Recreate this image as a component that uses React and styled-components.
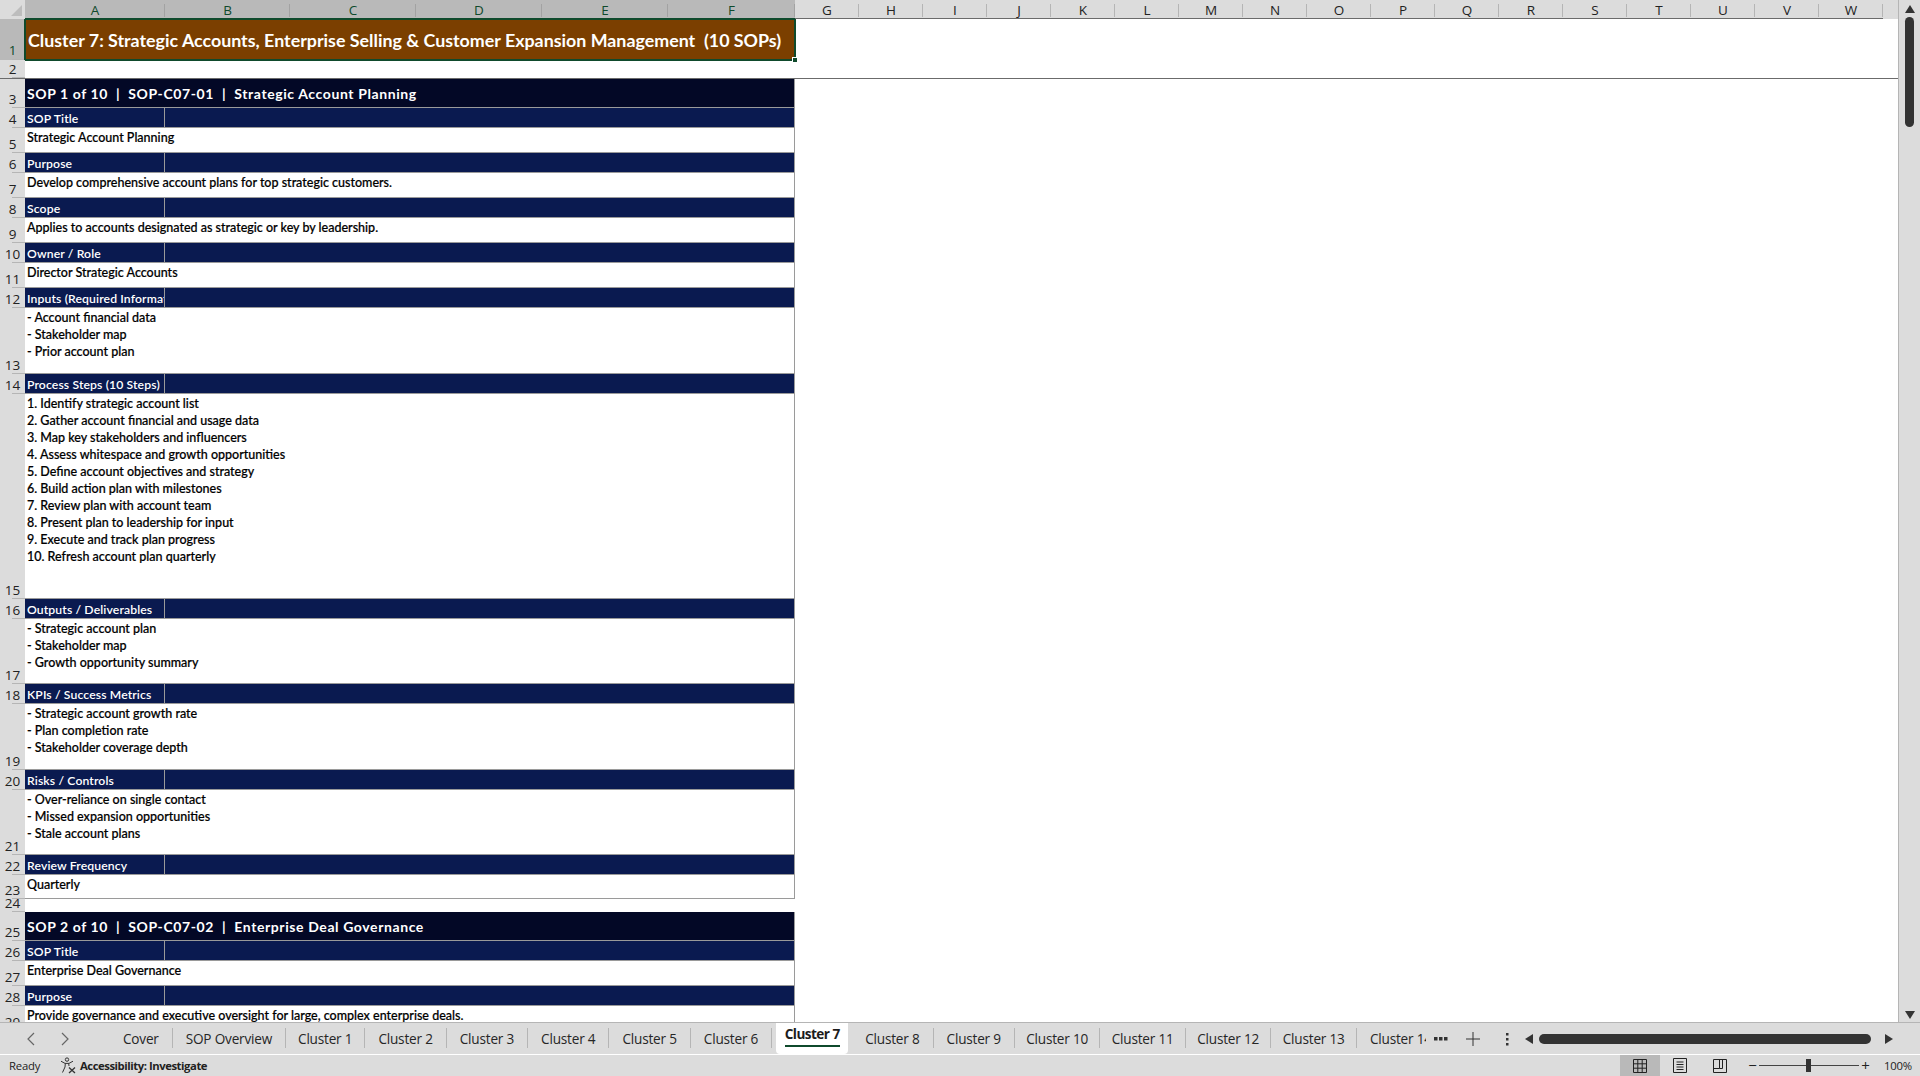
import React from 'react';
import styled, { createGlobalStyle } from 'styled-components';

const GlobalStyle = createGlobalStyle`
  html, body { margin: 0; padding: 0; background: #fff; overflow: hidden; }
  * { box-sizing: border-box; }
`

const Page = styled.div`
  width: 1920px;
  height: 1076px;
  display: flex;
  flex-direction: column;
  overflow: hidden;
  font-family: "Lato", "Open Sans", sans-serif;
  background: #fff;
`

const HeaderRow = styled.div`
  height: 19px;
  display: flex;
  background: #dcdcdc;
  flex: none;
`

const Corner = styled.div`
  width: 25px;
  flex: none;
  display: flex;
  align-items: flex-end;
  justify-content: flex-end;
  padding: 0 3px 3px 0;
  background: #dcdcdc;
`

const ColHead = styled.div`
  width: ${props => props.width}px;
  flex: none;
  display: flex;
  align-items: center;
  justify-content: center;
  font-family: "Open Sans", sans-serif;
  font-size: 13.5px;
  padding-top: 1px;
  color: ${props => props.selected ? '#0f4a2c' : '#222'};
  background: ${props => props.selected ? '#b9b9b9' : '#dcdcdc'};
  border-bottom: 1px solid ${props => props.selected ? '#0f4a2c' : '#6b6b6b'};
  position: relative;
  &::after {
    content: '';
    position: absolute;
    right: 0;
    top: 4px;
    bottom: 1px;
    width: 1px;
    background: ${props => props.selected ? '#a2a2a2' : '#b5b5b5'};
  }
`

const Body = styled.div`
  flex: 1;
  min-height: 0;
  display: flex;
`

const Sheet = styled.div`
  flex: 1;
  min-width: 0;
  overflow: hidden;
  background: #fff;
`

const Row = styled.div`
  height: ${props => props.height}px;
  display: flex;
  position: relative;
  border-bottom: ${props => props.freeze ? '1px solid #6b6b6b' : 'none'};
`

const RowHead = styled.div`
  width: 25px;
  flex: none;
  display: flex;
  align-items: flex-end;
  justify-content: center;
  font-family: "Open Sans", sans-serif;
  font-size: 13.5px;
  line-height: 17px;
  padding-bottom: ${props => props.selected ? '1px' : '0'};
  color: ${props => props.selected ? '#0f4a2c' : '#222'};
  background: ${props => props.selected ? '#b9b9b9' : '#dcdcdc'};
  position: relative;
  &::after {
    content: '';
    position: absolute;
    right: 0;
    bottom: 0;
    width: 13px;
    height: 1px;
    background: #b5b5b5;
  }
`

const Cells = styled.div`
  width: 770px;
  flex: none;
  display: flex;
  min-width: 0;
`

const TitleCell = styled.div`
  flex: 1;
  display: flex;
  align-items: center;
  padding-left: 2px;
  background: #7b3f00;
  color: #fff;
  font-size: 17.83px;
  font-weight: 700;
  white-space: pre;
  border: 1px solid #fff;
  outline: 2px solid #0f4a2c;
  outline-offset: -1px;
  position: relative;
`

const FillHandle = styled.span`
  position: absolute;
  right: -4px;
  bottom: -4px;
  width: 6px;
  height: 6px;
  background: #0f4a2c;
  border: 1px solid #fff;
`

const BandCell = styled.div`
  flex: 1;
  display: flex;
  align-items: center;
  padding-left: 2px;
  background: #030826;
  color: #fff;
  font-size: 14px;
  font-weight: 700;
  letter-spacing: 0.6px;
  white-space: pre;
  border-right: 1px solid #9a9a9a;
  border-bottom: 1px solid #9a9a9a;
`

const LabelCell = styled.div`
  width: ${props => props.width ? `${props.width}px` : 'auto'};
  flex: ${props => props.width ? 'none' : '1'};
  display: flex;
  align-items: center;
  padding: 1px 0 0 2px;
  overflow: hidden;
  white-space: nowrap;
  background: #0a1a50;
  color: #fff;
  font-size: 12.2px;
  font-weight: 600;
  letter-spacing: 0.12px;
  border-right: 1px solid #9a9a9a;
  border-bottom: 1px solid #9a9a9a;
`

const ContentCell = styled.div`
  flex: 1;
  padding: 1px 0 0 2px;
  background: #fff;
  color: #000;
  font-size: 12.5px;
  font-weight: 500;
  line-height: 17px;
  -webkit-text-stroke: 0.2px #000;
  overflow: hidden;
  border-right: 1px solid #9a9a9a;
  border-bottom: 1px solid #9a9a9a;
`

const Line = styled.div`
  height: 17px;
  white-space: nowrap;
`

const VScroll = styled.div`
  width: 22px;
  flex: none;
  display: flex;
  flex-direction: column;
  align-items: center;
  background: #dcdcdc;
  border-left: 1px solid #b5b5b5;
  margin-top: -19px;
  position: relative;
  padding-top: 5px;
`

const VThumb = styled.div`
  width: 9px;
  height: 110px;
  margin-top: 4px;
  border-radius: 5px;
  background: #333;
`

const VArrowDown = styled.div`
  margin-top: auto;
  margin-bottom: 3px;
  line-height: 0;
`

const TabBar = styled.div`
  height: 32px;
  flex: none;
  display: flex;
  align-items: center;
  background: #dcdcdc;
  border-top: 1px solid #b5b5b5;
  position: relative;
`

const TabNav = styled.div`
  width: 110px;
  flex: none;
  display: flex;
  align-items: center;
  gap: 24px;
  padding-left: 26px;
`

const TabList = styled.div`
  width: 1321px;
  flex: none;
  display: flex;
  align-items: center;
  height: 100%;
  overflow: hidden;
`

const Tab = styled.div`
  flex: none;
  height: 20px;
  margin-bottom: 1px;
  padding: 0 ${props => props.pad ?? 13}px;
  display: flex;
  align-items: center;
  font-family: "Open Sans", sans-serif;
  font-size: 13.6px;
  letter-spacing: -0.2px;
  color: #262626;
  border-right: 1px solid #b5b5b5;
`

const ClippedTab = styled(Tab)`
  width: 69px;
  padding: 0 0 0 13px;
  overflow: hidden;
  white-space: nowrap;
  border-right: none;
`

const ActiveTab = styled.div`
  flex: none;
  width: 72px;
  height: 31px;
  margin: -1px 4px 0 4px;
  background: #fff;
  border-radius: 0 0 4px 4px;
  display: flex;
  justify-content: center;
`

const ActiveLabel = styled.div`
  height: 24px;
  font-family: "Open Sans", sans-serif;
  font-size: 13.6px;
  font-weight: 700;
  letter-spacing: -0.55px;
  line-height: 21px;
  color: #1c1c1c;
  border-bottom: 2px solid #0f4a2c;
  white-space: nowrap;
`

const TabTools = styled.div`
  flex: 1;
  display: flex;
  align-items: center;
  min-width: 0;
`

const ToolGlyph = styled.div`
  width: ${props => props.width}px;
  flex: none;
  display: flex;
  justify-content: center;
  line-height: 0;
`

const HTrack = styled.div`
  flex: none;
  width: 332px;
  height: 10px;
  border-radius: 5px;
  background: #333;
`

const StatusBar = styled.div`
  height: 22px;
  flex: none;
  display: flex;
  align-items: center;
  background: #dcdcdc;
  border-top: 1px solid #fff;
  font-family: "Open Sans", sans-serif;
  font-size: 11.3px;
  letter-spacing: -0.2px;
  color: #222;
`

const Ready = styled.span`
  width: 60px;
  flex: none;
  padding-left: 9px;
`

const Access = styled.span`
  display: flex;
  align-items: center;
  gap: 4px;
  font-weight: 700;
  letter-spacing: -0.45px;
`

const ViewGroup = styled.div`
  margin-left: auto;
  display: flex;
  align-items: center;
  height: 100%;
`

const ViewBtn = styled.div`
  width: 40px;
  height: 100%;
  display: flex;
  align-items: center;
  justify-content: center;
  background: ${props => props.active ? '#b9b9b9' : 'transparent'};
`

const Zoomer = styled.div`
  display: flex;
  align-items: center;
  width: 180px;
  height: 100%;
  padding-left: 6px;
`

const ZoomSign = styled.span`
  width: 13px;
  text-align: center;
  font-size: 15px;
  line-height: 1;
`

const ZoomSlider = styled.div`
  width: 100px;
  height: 1px;
  background: #444;
  position: relative;
`

const ZoomKnob = styled.span`
  position: absolute;
  left: 47px;
  top: -6px;
  width: 5px;
  height: 13px;
  background: #333;
`

const ZoomPct = styled.span`
  margin-left: 12px;
`

const colsSelected = [['A', 140], ['B', 125], ['C', 126], ['D', 126], ['E', 126], ['F', 127]]
const colsPlain = 'GHIJKLMNOPQRSTUVW'.split('')

const sopOne = [
  { h: 29, band: 'SOP 1 of 10  |  SOP-C07-01  |  Strategic Account Planning' },
  { h: 20, label: 'SOP Title' },
  { h: 25, lines: ['Strategic Account Planning'] },
  { h: 20, label: 'Purpose' },
  { h: 25, lines: ['Develop comprehensive account plans for top strategic customers.'] },
  { h: 20, label: 'Scope' },
  { h: 25, lines: ['Applies to accounts designated as strategic or key by leadership.'] },
  { h: 20, label: 'Owner / Role' },
  { h: 25, lines: ['Director Strategic Accounts'] },
  { h: 20, label: 'Inputs (Required Information)' },
  { h: 66, lines: ['- Account financial data', '- Stakeholder map', '- Prior account plan'] },
  { h: 20, label: 'Process Steps (10 Steps)' },
  {
    h: 205,
    lines: [
      '1. Identify strategic account list',
      '2. Gather account financial and usage data',
      '3. Map key stakeholders and influencers',
      '4. Assess whitespace and growth opportunities',
      '5. Define account objectives and strategy',
      '6. Build action plan with milestones',
      '7. Review plan with account team',
      '8. Present plan to leadership for input',
      '9. Execute and track plan progress',
      '10. Refresh account plan quarterly',
    ],
  },
  { h: 20, label: 'Outputs / Deliverables' },
  { h: 65, lines: ['- Strategic account plan', '- Stakeholder map', '- Growth opportunity summary'] },
  { h: 20, label: 'KPIs / Success Metrics' },
  { h: 66, lines: ['- Strategic account growth rate', '- Plan completion rate', '- Stakeholder coverage depth'] },
  { h: 20, label: 'Risks / Controls' },
  { h: 65, lines: ['- Over-reliance on single contact', '- Missed expansion opportunities', '- Stale account plans'] },
  { h: 20, label: 'Review Frequency' },
  { h: 24, lines: ['Quarterly'] },
  { h: 13 },
  { h: 29, band: 'SOP 2 of 10  |  SOP-C07-02  |  Enterprise Deal Governance' },
  { h: 20, label: 'SOP Title' },
  { h: 25, lines: ['Enterprise Deal Governance'] },
  { h: 20, label: 'Purpose' },
  { h: 25, lines: ['Provide governance and executive oversight for large, complex enterprise deals.'] },
]

const tabsBefore = [
  { name: 'Cover' },
  { name: 'SOP Overview' },
  { name: 'Cluster 1', pad: 12 },
  { name: 'Cluster 2' },
  { name: 'Cluster 3' },
  { name: 'Cluster 4' },
  { name: 'Cluster 5' },
  { name: 'Cluster 6' },
]
const tabsAfter = [
  { name: 'Cluster 8' },
  { name: 'Cluster 9' },
  { name: 'Cluster 10', pad: 11.3 },
  { name: 'Cluster 11', pad: 11.3 },
  { name: 'Cluster 12', pad: 11.3 },
  { name: 'Cluster 13', pad: 11.3 },
]

const Triangle = ({ dir, size = 8, fill = '#333' }) => {
  const points = {
    up: '5,0 10,8 0,8',
    down: '0,0 10,0 5,8',
    left: '8,0 8,10 0,5',
    right: '0,0 8,5 0,10',
  }
  const vertical = dir === 'up' || dir === 'down'
  return (
    <svg width={vertical ? size + 2 : size} height={vertical ? size : size + 2} viewBox={vertical ? '0 0 10 8' : '0 0 8 10'}>
      <polygon points={points[dir]} fill={fill} />
    </svg>
  )
}

const Chevron = ({ left }) => (
  <svg width="10" height="14" viewBox="0 0 10 14" fill="none" stroke="#666" strokeWidth="1.2">
    <path d={left ? 'M8 1 L2 7 L8 13' : 'M2 1 L8 7 L2 13'} />
  </svg>
)

const AccessIcon = () => (
  <svg width="16" height="17" viewBox="0 0 16 17" fill="none" stroke="#333" strokeWidth="1">
    <circle cx="7" cy="2.6" r="1.7" />
    <path d="M1 4.2 L5 6.4 H9 L13 4.2 M5.3 6.6 L5 10 L2.5 15.5 M8.7 6.6 L9 9" />
    <path d="M9 10.5 L15 16 M15 10.5 L9 16" strokeWidth="1.3" />
  </svg>
)

const NormalIcon = () => (
  <svg width="14" height="14" viewBox="0 0 14 14" fill="none" stroke="#222" strokeWidth="1">
    <path d="M.5 .5 H13.5 V13.5 H.5 Z M4.8 .5 V13.5 M9.2 .5 V13.5 M.5 4.8 H13.5 M.5 9.2 H13.5" />
  </svg>
)

const LayoutIcon = () => (
  <svg width="14" height="15" viewBox="0 0 14 15" fill="none" stroke="#222" strokeWidth="1">
    <path d="M.5 .5 H13.5 V14.5 H.5 Z" />
    <path d="M3.5 4 H10.5 M3.5 6.5 H10.5 M3.5 9 H10.5 M3.5 11.5 H10.5" />
  </svg>
)

const BreakIcon = () => (
  <svg width="14" height="14" viewBox="0 0 14 14" fill="none" stroke="#222" strokeWidth="1">
    <path d="M.5 .5 H13.5 V13.5 H.5 Z M.5 9.5 H6.5 V.5 M6.5 9.5 H9.5 V.5" />
  </svg>
)

const SheetRow = ({ n, row }) => (
  <Row height={row.h}>
    <RowHead>{n}</RowHead>
    <Cells>
      {row.band && <BandCell>{row.band}</BandCell>}
      {row.label && <LabelCell width={140}>{row.label}</LabelCell>}
      {row.label && <LabelCell />}
      {row.lines && (
        <ContentCell>
          {row.lines.map((text, idx) => <Line key={idx}>{text}</Line>)}
        </ContentCell>
      )}
    </Cells>
  </Row>
)

export default function App() {
  return (
    <Page>
      <GlobalStyle />
      <HeaderRow>
        <Corner>
          <svg width="11" height="11" viewBox="0 0 11 11"><polygon points="11,0 11,11 0,11" fill="#bdbdbd" /></svg>
        </Corner>
        {colsSelected.map(([name, width]) => <ColHead key={name} width={width} selected>{name}</ColHead>)}
        {colsPlain.map(name => <ColHead key={name} width={64}>{name}</ColHead>)}
      </HeaderRow>
      <Body>
        <Sheet>
          <Row height={41}>
            <RowHead selected>1</RowHead>
            <Cells>
              <TitleCell>
                {'Cluster 7: Strategic Accounts, Enterprise Selling & Customer Expansion Management  (10 SOPs)'}
                <FillHandle />
              </TitleCell>
            </Cells>
          </Row>
          <Row height={19} freeze>
            <RowHead>2</RowHead>
          </Row>
          {sopOne.map((row, idx) => <SheetRow key={idx} n={idx + 3} row={row} />)}
        </Sheet>
        <VScroll>
          <Triangle dir="up" size={8} />
          <VThumb />
          <VArrowDown><Triangle dir="down" size={8} /></VArrowDown>
        </VScroll>
      </Body>
      <TabBar>
        <TabNav>
          <Chevron left />
          <Chevron />
        </TabNav>
        <TabList>
          {tabsBefore.map(tab => <Tab key={tab.name} pad={tab.pad}>{tab.name}</Tab>)}
          <ActiveTab><ActiveLabel>Cluster 7</ActiveLabel></ActiveTab>
          {tabsAfter.map(tab => <Tab key={tab.name} pad={tab.pad}>{tab.name}</Tab>)}
          <ClippedTab>Cluster 14</ClippedTab>
        </TabList>
        <TabTools>
          <ToolGlyph width={20}>
            <svg width="14" height="4" viewBox="0 0 14 4" fill="#333"><rect width="3.5" height="3.5" /><rect x="5" width="3.5" height="3.5" /><rect x="10" width="3.5" height="3.5" /></svg>
          </ToolGlyph>
          <ToolGlyph width={44}>
            <svg width="14" height="14" viewBox="0 0 14 14" stroke="#333" strokeWidth="1"><path d="M7 0 V14 M0 7 H14" /></svg>
          </ToolGlyph>
          <ToolGlyph width={24}>
            <svg width="4" height="14" viewBox="0 0 4 14" fill="#333"><rect x="1" y="1" width="2.5" height="2.5" /><rect x="1" y="6" width="2.5" height="2.5" /><rect x="1" y="11" width="2.5" height="2.5" /></svg>
          </ToolGlyph>
          <ToolGlyph width={20}><Triangle dir="left" size={8} /></ToolGlyph>
          <HTrack />
          <ToolGlyph width={36}><Triangle dir="right" size={8} /></ToolGlyph>
        </TabTools>
      </TabBar>
      <StatusBar>
        <Ready>Ready</Ready>
        <Access><AccessIcon />Accessibility: Investigate</Access>
        <ViewGroup>
          <ViewBtn active><NormalIcon /></ViewBtn>
          <ViewBtn><LayoutIcon /></ViewBtn>
          <ViewBtn><BreakIcon /></ViewBtn>
          <Zoomer>
            <ZoomSign>−</ZoomSign>
            <ZoomSlider><ZoomKnob /></ZoomSlider>
            <ZoomSign>+</ZoomSign>
            <ZoomPct>100%</ZoomPct>
          </Zoomer>
        </ViewGroup>
      </StatusBar>
    </Page>
  )
}
